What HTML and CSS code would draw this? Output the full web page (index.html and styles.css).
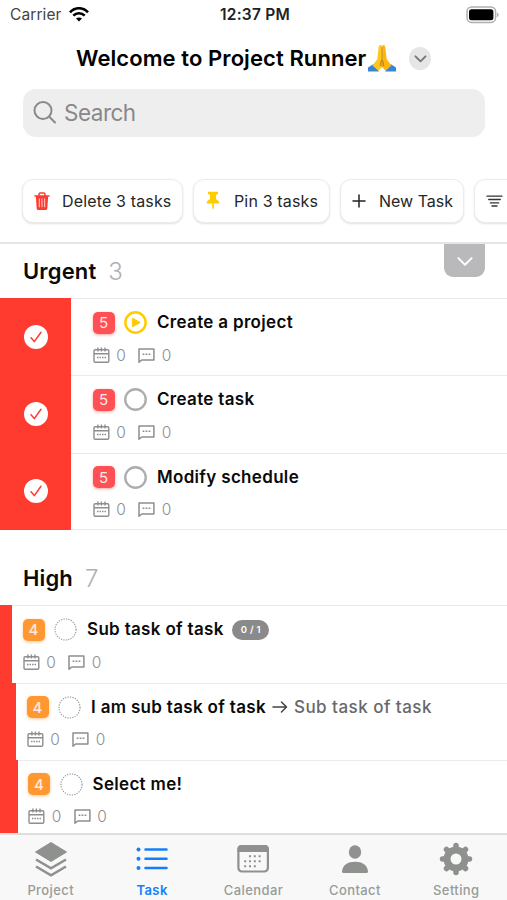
FILE: index.html
```html
<!DOCTYPE html>
<html lang="en">
<head>
<meta charset="utf-8">
<title>Project Runner</title>
<link rel="stylesheet" href="styles.css">
</head>
<body>
<svg class="sprite" aria-hidden="true">
  <symbol id="chevron" viewBox="0 0 24 24"><path d="M4 8.500 12 16.500 20 8.500" fill="none" stroke="currentColor" stroke-linecap="round" stroke-linejoin="round"/></symbol>
  <symbol id="check" viewBox="0 0 24 24"><circle cx="12" cy="12" r="12" fill="#fff"/><path d="M7 12.800 10.300 16.600 17 7.300" fill="none" stroke="#ff3b30" stroke-width="1.500" stroke-linecap="round" stroke-linejoin="round"/></symbol>
  <symbol id="date" viewBox="0 0 17 17"><g fill="none" stroke="currentColor" stroke-width="1.400"><rect x="1" y="2.700" width="14.800" height="12.600" rx="1.200"/><path d="M1 6.800h14.800M4.900.6v3.900M8.400.6v3.900M12 .6v3.900"/><path d="M4 10.600h9.200" stroke-width="1.500" stroke-dasharray="1.500 1"/></g></symbol>
  <symbol id="comment" viewBox="0 0 17 17"><path d="M1 15.200V2h14.900v11H3.800Z" fill="none" stroke="currentColor" stroke-width="1.500" stroke-linejoin="round"/><path d="M4.600 7.200h8" fill="none" stroke="currentColor" stroke-width="1.400" stroke-dasharray="1.800 1.200"/></symbol>
  <symbol id="play" viewBox="0 0 24 24"><circle cx="12" cy="12" r="10.600" fill="none" stroke="#fc0" stroke-width="2.600"/><path d="M9.200 8v8l7-4Z" fill="#fc0" stroke="#fc0" stroke-width="1.600" stroke-linejoin="round"/></symbol>
  <symbol id="todo" viewBox="0 0 24 24"><circle cx="12" cy="12" r="10.700" fill="none" stroke="#adadaf" stroke-width="2.500"/></symbol>
  <symbol id="draft" viewBox="0 0 24 24"><circle cx="12" cy="12" r="11" fill="none" stroke="#98989b" stroke-width="1.200" stroke-dasharray="1.300 1.300"/></symbol>
</svg>
<div class="app">
  <header class="status">
    <div class="carrier"><span>Carrier</span>
      <svg width="20" height="15" viewBox="0 0 20 15"><g fill="none" stroke="#000" stroke-width="2.600"><path d="M1 5.300C6-.1 14-.1 19 5.300"/><path d="M4.300 8.700c3.300-3.300 8.100-3.300 11.400 0"/></g><path d="M7 11.500c1.700-1.500 4.300-1.500 6 0L10 14.600Z"/></svg>
    </div>
    <div class="clock">12:37 PM</div>
    <svg class="battery" width="34" height="18" viewBox="0 0 34 18"><rect x="1" y="1" width="28.600" height="15.400" rx="4.600" fill="#fff" stroke="#b0b0b0" stroke-width="1.500"/><rect x="3" y="3.200" width="24.400" height="11" rx="2.500"/><path d="M31 6.700c2.200.7 2.200 3.600 0 4.300Z" fill="#b0b0b0"/></svg>
  </header>
  <div class="heading">
    <h1>Welcome to Project Runner</h1>
    <svg class="hands" width="30" height="28" viewBox="0 0 30 28"><path d="M1 23.500 6.500 20l5.500 7.600H1Z" fill="#3886d2"/><path d="M29 23.500 23.500 20 18 27.600h11Z" fill="#3886d2"/><path d="M14.800 1.500c-1.800-1.300-3-.2-3.200 2l-1.300 11.700-4.800 6.200 6 5.300 3.300-3.500Z" fill="#ffc61c"/><path d="M15.200 1.500c1.800-1.300 3-.2 3.200 2l1.300 11.700 4.800 6.200-6 5.300-3.300-3.500Z" fill="#ffb50d"/><path d="M15 3v20M15 16c-1.300 1.500-1.400 4-1.800 6M15 16c1.300 1.500 1.400 4 1.800 6" fill="none" stroke="#b87908" stroke-width=".9"/></svg>
    <button class="more" aria-label="Switch workspace"><svg width="15" height="15" stroke-width="3"><use href="#chevron"/></svg></button>
  </div>
  <div class="search">
    <svg width="24" height="24" viewBox="0 0 24 24"><g fill="none" stroke="#8a8a8c" stroke-width="2" stroke-linecap="round"><circle cx="10" cy="9.500" r="8.500"/><path d="m16.300 15.800 5.700 5.700"/></g></svg>
    <span>Search</span>
  </div>
  <div class="actions">
    <button class="action delete"><svg width="16" height="19" viewBox="0 0 16 19"><path d="M1 4h14M5 3.600V2.200Q5 1 6.200 1h3.600Q11 1 11 2.200v1.400" fill="none" stroke="#ff3b30" stroke-width="1.500" stroke-linecap="round"/><path d="M1.800 4h12.400L13.300 16.500Q13.200 18 11.700 18H4.300Q2.800 18 2.700 16.500Z" fill="#ff3b30"/><path d="M5.300 6.500v8.700M8 6.500v8.700M10.700 6.500v8.700" stroke="#ffd3d0" stroke-width="1"/></svg><span>Delete 3 tasks</span></button>
    <button class="action pin"><svg width="14" height="20" viewBox="0 0 14 20"><path d="M2 .8h10v2.300L10 4v4.200c2.200.9 3.300 2.200 3.300 4.300H.7C.7 10.400 1.800 9.100 4 8.200V4L2 3.100ZM6.200 12.500h1.600v4L7 19l-.8-2.500Z" fill="#fc0"/></svg><span>Pin 3 tasks</span></button>
    <button class="action new"><svg width="14" height="14" viewBox="0 0 14 14"><path d="M7 1v12M1 7h12" stroke="#222" stroke-width="1.500" stroke-linecap="round"/></svg><span>New Task</span></button>
    <button class="action sort"><svg width="17" height="12" viewBox="0 0 17 12"><path d="M1 1.200h15M2.700 4.500h11.600M4.300 7.800h8.400M6 11h5" stroke="#333" stroke-width="1.300" stroke-linecap="round"/></svg></button>
  </div>
  <main class="list">
    <button class="collapse" aria-label="Collapse"><svg width="20" height="20" stroke-width="2.200"><use href="#chevron"/></svg></button>
    <section class="urgent">
      <h2>Urgent <span>3</span></h2>
      <article class="row">
        <div class="stripe"><svg width="24" height="24"><use href="#check"/></svg></div>
        <div class="task"><div class="line"><b class="level">5</b><svg width="23" height="23"><use href="#play"/></svg><h3>Create a project</h3></div>
        <div class="meta"><svg><use href="#date"/></svg><span>0</span><svg><use href="#comment"/></svg><span>0</span></div></div>
      </article>
      <article class="row">
        <div class="stripe"><svg width="24" height="24"><use href="#check"/></svg></div>
        <div class="task"><div class="line"><b class="level">5</b><svg width="23" height="23"><use href="#todo"/></svg><h3>Create task</h3></div>
        <div class="meta"><svg><use href="#date"/></svg><span>0</span><svg><use href="#comment"/></svg><span>0</span></div></div>
      </article>
      <article class="row">
        <div class="stripe"><svg width="24" height="24"><use href="#check"/></svg></div>
        <div class="task"><div class="line"><b class="level">5</b><svg width="23" height="23"><use href="#todo"/></svg><h3>Modify schedule</h3></div>
        <div class="meta"><svg><use href="#date"/></svg><span>0</span><svg><use href="#comment"/></svg><span>0</span></div></div>
      </article>
    </section>
    <section class="high">
      <h2>High <span>7</span></h2>
      <article class="row swipe-a">
        <div class="stripe"></div>
        <div class="task"><div class="line"><b class="level">4</b><svg width="23" height="23"><use href="#draft"/></svg><h3>Sub task of task</h3><span class="progress">0 / 1</span></div>
        <div class="meta"><svg><use href="#date"/></svg><span>0</span><svg><use href="#comment"/></svg><span>0</span></div></div>
      </article>
      <article class="row swipe-b">
        <div class="stripe"></div>
        <div class="task"><div class="line"><b class="level">4</b><svg width="23" height="23"><use href="#draft"/></svg><h3>I am sub task of task</h3><svg class="arrow" width="16" height="14" viewBox="0 0 16 14"><path d="M1 7h13.500M9.500 2l5 5-5 5" fill="none" stroke="#444" stroke-width="1.500" stroke-linecap="round" stroke-linejoin="round"/></svg><span class="parent">Sub task of task</span></div>
        <div class="meta"><svg><use href="#date"/></svg><span>0</span><svg><use href="#comment"/></svg><span>0</span></div></div>
      </article>
      <article class="row swipe-c">
        <div class="stripe"></div>
        <div class="task"><div class="line"><b class="level">4</b><svg width="23" height="23"><use href="#draft"/></svg><h3>Select me!</h3></div>
        <div class="meta"><svg><use href="#date"/></svg><span>0</span><svg><use href="#comment"/></svg><span>0</span></div></div>
      </article>
    </section>
  </main>
  <nav class="tabs">
    <a class="tab"><svg width="34" height="36" viewBox="0 0 34 36"><path d="M17 1.500 32.500 11 17 20.500 1.500 11Z" fill="#8e918e" stroke="#8e918e" stroke-linejoin="round"/><path d="M2 18.500 17 27.300 32 18.500M2 25.500 17 34.300 32 25.500" fill="none" stroke="#8e918e" stroke-width="2.600"/></svg><span>Project</span></a>
    <a class="tab active"><svg width="34" height="36" viewBox="0 0 34 36"><g stroke="#147efb" stroke-width="2.500" stroke-linecap="round"><path d="M10.500 8.500h21M10.500 17.800h21M10.500 27.100h21"/></g><g fill="#147efb"><circle cx="3.500" cy="8.500" r="2"/><circle cx="3.500" cy="17.800" r="2"/><circle cx="3.500" cy="27.100" r="2"/></g></svg><span>Task</span></a>
    <a class="tab"><svg width="34" height="36" viewBox="0 0 34 36"><rect x="2.400" y="5" width="29.500" height="25.500" rx="3.500" fill="none" stroke="#8e918e" stroke-width="2.200"/><path d="M1.500 11V8q0-4 4-4h23.300q4 0 4 4v3Z" fill="#8e918e"/><g stroke="#8e918e" stroke-width="2"><path d="M13 15.200h13" stroke-dasharray="2 2.800"/><path d="M8.200 20.200h17" stroke-dasharray="2 2.800"/><path d="M8.200 25.200h12" stroke-dasharray="2 2.800"/></g></svg><span>Calendar</span></a>
    <a class="tab"><svg width="34" height="36" viewBox="0 0 34 36"><ellipse cx="17" cy="11" rx="6.200" ry="6.800" fill="#8e918e"/><path d="M4 30.500C4.500 24 10 20.800 17 20.800S29.500 24 30 30.500q0 1.500-1.500 1.500h-23Q4 32 4 30.500Z" fill="#8e918e"/></svg><span>Contact</span></a>
    <a class="tab"><svg width="34" height="36" viewBox="0 0 34 36"><circle cx="17" cy="18" r="9" fill="none" stroke="#8e918e" stroke-width="7"/><g stroke="#8e918e" stroke-width="5.500" stroke-linecap="round"><path d="M17 4.500v3M17 28.500v3M3.500 18h3M27.500 18h3M7.500 8.500l2 2M24.500 25.500l2 2M26.500 8.500l-2 2M9.500 25.500l-2 2"/></g></svg><span>Setting</span></a>
  </nav>
</div>
</body>
</html>
```
FILE: styles.css
```css
* { box-sizing: border-box; }
body { margin: 0; background: #fff; color: #0a0a0a; font-family: Inter, "Liberation Sans", sans-serif; }
h1, h2, h3 { margin: 0; font-weight: 600; white-space: nowrap; }
svg { display: block; flex: none; }
button { font: inherit; color: inherit; border: 0; padding: 0; }
.sprite { position: absolute; width: 0; height: 0; }
.app { width: 507px; height: 900px; display: flex; flex-direction: column; overflow: hidden; }

.status { height: 29px; padding: 0 7px 0 10px; display: grid; grid-template-columns: 1fr auto 1fr; align-items: center; font-size: 15.500px; }
.carrier { display: flex; align-items: center; gap: 7px; color: #444; letter-spacing: .1px; }
.clock { font-weight: 600; font-size: 15.500px; letter-spacing: .25px; color: #222; }
.battery { justify-self: end; }

.heading { height: 60px; padding: 0 76px 3px; display: flex; align-items: center; }
h1 { font-size: 22px; letter-spacing: .08px; color: #000; }
.hands { margin-left: 1px; }
.more { width: 23px; height: 23px; margin: 2px 0 0 12px; border-radius: 50%; background: #e6e6e6; color: #777; display: grid; place-items: center; }

.search { height: 48px; margin: 0 22px 0 23px; padding: 0 0 1px 10px; border-radius: 13px; background: #eee; display: flex; align-items: center; gap: 7px; color: #88888a; font-size: 22.500px; letter-spacing: -.5px; flex: none; }

.actions { height: 107px; padding: 42px 0 0 22px; display: flex; align-items: flex-start; gap: 10px; border-bottom: 2px solid #e5e5e5; flex: none; overflow: hidden; }
.action { height: 44px; flex: none; display: flex; align-items: center; background: #fff; border: 1px solid #ececec; border-radius: 11px; box-shadow: 0 1px 2px rgba(0, 0, 0, .12); font-size: 16px; color: #262626; letter-spacing: .15px; white-space: nowrap; }
.delete { width: 161px; padding-left: 11px; gap: 12px; }
.pin { width: 137px; padding-left: 12px; gap: 14px; }
.new { width: 124px; padding-left: 11px; gap: 13px; letter-spacing: 0; }
.sort { width: 100px; padding-left: 11px; }

.list { flex: 1; min-height: 0; overflow: hidden; position: relative; }
.collapse { position: absolute; right: 22px; top: 0; width: 41px; height: 33px; border-radius: 0 0 9px 9px; background: #b9b9bb; color: #fff; display: grid; place-items: center; }
h2 { padding-left: 23px; display: flex; align-items: center; gap: 12px; font-size: 22px; letter-spacing: .15px; }
h2 span { font-weight: 300; color: #b0b0b2; font-size: 24px; }
.urgent h2 { height: 54px; }
.high h2 { height: 75px; padding-top: 21px; }

.row { height: 77.400px; display: flex; }
.stripe { width: 71px; background: #ff3b30; display: grid; place-items: center; flex: none; }
.task { flex: 1; min-width: 0; padding: 12px 0 0 21.500px; border-top: 1px solid #ebebeb; }
.urgent .row:last-child .task { border-bottom: 1px solid #ebebeb; }
.high .task { padding-left: 10.500px; }
.swipe-a .stripe { width: 12px; }
.swipe-b .stripe { width: 16px; }
.swipe-c .stripe { width: 17.500px; }
.line { display: flex; align-items: center; height: 23px; }
.level { width: 22px; height: 22px; margin-right: 9.500px; border-radius: 5px; background: #ff5055; color: #ffe9e6; font-size: 15px; font-weight: 400; display: grid; place-items: center; box-shadow: 0 1px 3px rgba(255, 80, 60, .5); }
.high .level { background: #ff9830; box-shadow: 0 1px 3px rgba(255, 140, 30, .5); font-weight: 500; }
h3 { margin: -1px 0 0 10px; font-size: 17px; letter-spacing: .32px; }
.progress { margin-left: 8.500px; width: 37px; height: 20px; border-radius: 10px; background: #8a8a8c; color: #fff; font-size: 9.500px; font-weight: 600; letter-spacing: .3px; display: grid; place-items: center; }
.arrow { margin: 0 6px 0 6px; }
.parent { color: #68686a; font-size: 17px; font-weight: 500; letter-spacing: .47px; margin-top: -1px; white-space: nowrap; }
.meta { height: 20px; margin-top: 11px; display: flex; align-items: center; color: #8e8e90; font-size: 15.500px; font-weight: 300; }
.meta svg { width: 17px; height: 17px; }
.meta span { width: 10px; margin: 0 12px 0 6.500px; text-align: center; }

.tabs { height: 67px; border-top: 2px solid #dedede; background: #f7f8f7; display: grid; grid-template-columns: repeat(5, 1fr); flex: none; }
.tab { display: flex; flex-direction: column; align-items: center; padding-top: 6px; gap: 5px; color: #999b99; font-size: 13px; line-height: 17px; font-weight: 500; letter-spacing: .4px; }
.active { color: #147efb; font-weight: 600; }
```
